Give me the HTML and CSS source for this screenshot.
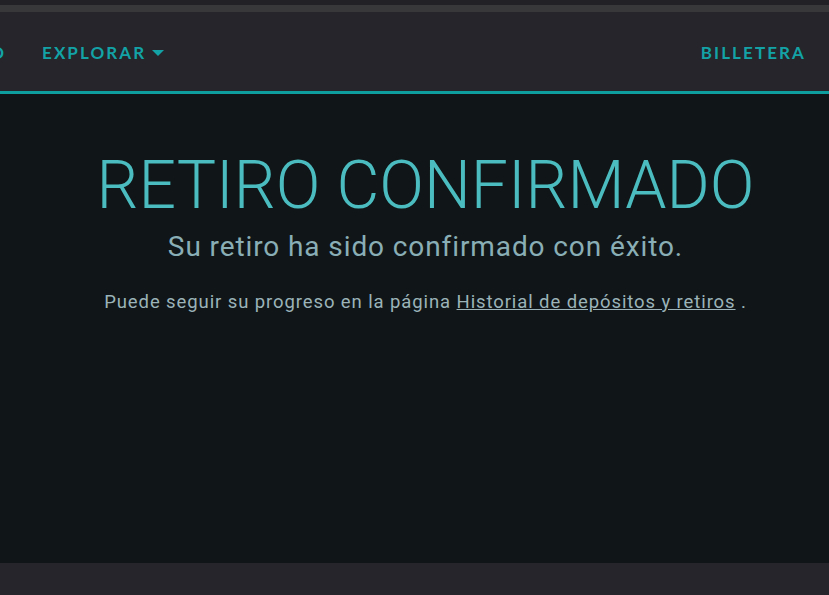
FILE: index.html
```html
<!DOCTYPE html>
<html lang="es">
<head>
<meta charset="utf-8">
<title>Retiro confirmado</title>
<link rel="stylesheet" href="styles.css">
</head>
<body>
<div class="topbar"><div class="topline"></div></div>
<header class="nav">
  <div class="nav-left">
    <a class="nav-item cut" href="#">DEPÓSITO</a>
    <a class="nav-item" href="#">EXPLORAR<span class="caret"></span></a>
  </div>
  <div class="nav-right">
    <a class="nav-item" href="#">BILLETERA</a>
  </div>
</header>
<main class="main">
  <h1 class="title">RETIRO CONFIRMADO</h1>
  <p class="subtitle">Su retiro ha sido confirmado con éxito.</p>
  <p class="info">Puede seguir su progreso en la página <a class="link" href="#">Historial de depósitos y retiros</a> .</p>
</main>
<footer class="footer"></footer>
</body>
</html>
```
FILE: styles.css
```css
html, body {
  margin: 0;
  padding: 0;
  height: 100%;
}
body {
  background: #26252b;
  font-family: Roboto, "Liberation Sans", sans-serif;
  display: flex;
  flex-direction: column;
  overflow: hidden;
}
.topbar {
  height: 12px;
  background: #222226;
  display: flex;
  flex-direction: column;
  justify-content: flex-end;
}
.topline {
  height: 7px;
  background: #38383a;
}
.nav {
  background: #26252b;
  border-bottom: 3px solid #0f9e9e;
  display: flex;
  align-items: center;
  justify-content: space-between;
  padding-right: 23px;
  padding-top: 2px;
  box-sizing: border-box;
  height: 82px;
}
.nav-left, .nav-right {
  display: flex;
  align-items: center;
}
.nav-item {
  font-family: Lato, "Open Sans", sans-serif;
  font-weight: 700;
  font-size: 17px;
  letter-spacing: 2.1px;
  color: #13a3a6;
  text-decoration: none;
  display: flex;
  align-items: center;
}
.cut {
  width: 100px;
  justify-content: flex-end;
  margin-left: -94px;
  margin-right: 36px;
  overflow: visible;
}
.caret {
  display: inline-block;
  width: 0;
  height: 0;
  border-left: 6px solid transparent;
  border-right: 6px solid transparent;
  border-top: 6px solid #13a3a6;
  margin-left: 6px;
  margin-top: 1px;
}
.main {
  flex: 0 0 469px;
  background: #101617;
  display: flex;
  flex-direction: column;
  align-items: center;
  padding-left: 22px;
  box-sizing: border-box;
}
.title {
  margin: 52px 0 0;
  font-weight: 300;
  font-size: 66px;
  line-height: 80px;
  color: #4bbcbf;
  letter-spacing: 0;
}
.subtitle {
  margin: 4px 0 0;
  font-size: 28px;
  line-height: 34px;
  letter-spacing: 0.9px;
  color: #8aaeb6;
}
.info {
  margin: 26px 0 0;
  font-size: 18.5px;
  line-height: 24px;
  letter-spacing: 0.9px;
  color: #9bb3b9;
}
.link {
  color: #9bb3b9;
  text-decoration: underline;
}
.footer {
  flex: 1;
  background: #26252b;
}
```
